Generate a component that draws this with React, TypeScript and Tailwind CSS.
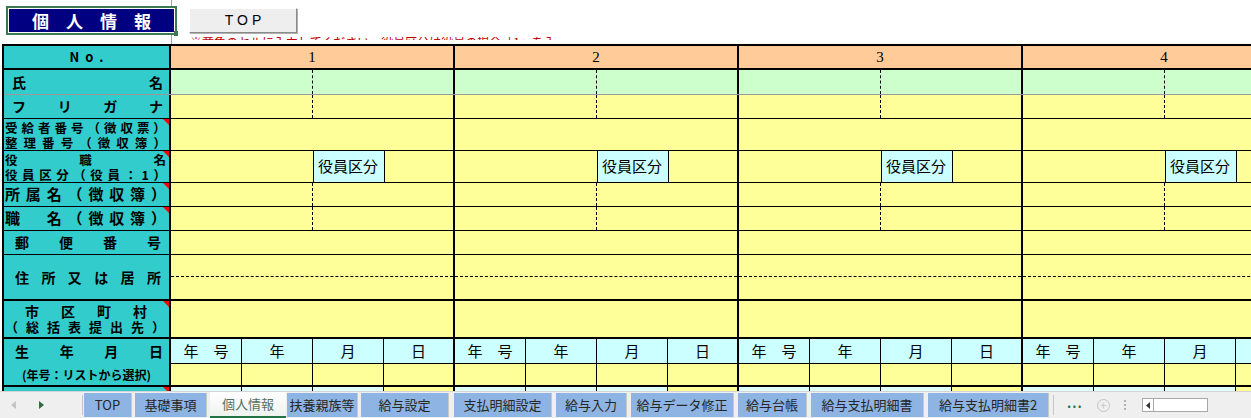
import React from 'react';

const JP = "font-['Noto_Sans_CJK_JP',sans-serif]";

function Dist({ text, className }: { text: string; className?: string }) {
  return (
    <div className={`flex justify-between ${className ?? ''}`}>
      {Array.from(text).map((c, i) => (
        <span key={i}>{c}</span>
      ))}
    </div>
  );
}

function Tri() {
  return <span className="absolute right-0 top-0 w-0 h-0 border-l-[6px] border-l-transparent border-t-[6px] border-t-[#ff0000]" />;
}

type Kind = 'head' | 'name' | 'kana' | 'plain' | 'yaku' | 'split' | 'addr' | 'birth' | 'tail';

function Group({ kind, n }: { kind: Kind; n: number }) {
  const base = 'w-[284px] shrink-0 h-full border-r-2 border-black';
  if (kind === 'head')
    return (
      <div className={`${base} bg-[#FFCC99] flex items-center justify-center font-['Liberation_Serif',serif] text-[15px] text-black`}>
        {n}
      </div>
    );
  if (kind === 'name' || kind === 'kana' || kind === 'split') {
    const bg = kind === 'name' ? 'bg-[#CCFFCC]' : 'bg-[#FFFF99]';
    return (
      <div className={`${base} ${bg} flex`}>
        <div className="w-[142px] h-full border-r border-dashed border-black" />
        <div className="flex-1" />
      </div>
    );
  }
  if (kind === 'plain') return <div className={`${base} bg-[#FFFF99]`} />;
  if (kind === 'yaku')
    return (
      <div className={`${base} bg-[#FFFF99] flex`}>
        <div className="w-[142px] h-full" />
        <div className={`w-[72px] h-full bg-[#CCFFFF] border-l border-r border-black flex items-center pl-[4px] text-[15px] ${JP} text-black`}>
          役員区分
        </div>
        <div className="flex-1" />
      </div>
    );
  if (kind === 'addr')
    return (
      <div className={`${base} bg-[#FFFF99] flex flex-col`}>
        <div className="h-[22px] border-b border-dashed border-black" />
        <div className="flex-1" />
      </div>
    );
  if (kind === 'birth') {
    const heads = ['年　号', '年', '月', '日'];
    return (
      <div className={`${base} flex flex-col`}>
        <div className="h-[25px] flex border-b border-black bg-[#CCFFFF]">
          {heads.map((h, i) => (
            <div
              key={i}
              className={`${i < 3 ? 'w-[71px] border-r border-black' : 'flex-1'} h-full flex items-center justify-center text-[15px] ${JP} text-black`}
            >
              {h}
            </div>
          ))}
        </div>
        <div className="flex-1 flex bg-[#FFFF99]">
          {heads.map((_, i) => (
            <div key={i} className={`${i < 3 ? 'w-[71px] border-r border-black' : 'flex-1'} h-full`} />
          ))}
        </div>
      </div>
    );
  }
  return (
    <div className={`${base} flex`}>
      <div className="w-[71px] border-r border-black bg-[#DFFFFF]" />
      <div className="w-[71px] border-r border-black bg-[#DFFFFF]" />
      <div className="w-[71px] border-r border-black bg-[#DFFFFF]" />
      <div className="flex-1 bg-[#FFFF99]" />
    </div>
  );
}

type Row = { h: string; b: string; kind: Kind; tri?: boolean; label: React.ReactNode };

const rows: Row[] = [
  {
    h: 'h-[24px]',
    b: 'border-b-2 border-black',
    kind: 'head',
    label: <div className="text-center text-[13px] font-bold tracking-[6px] pl-[6px]">No.</div>,
  },
  {
    h: 'h-[25px]',
    b: 'border-b border-[#9a9a9a]',
    kind: 'name',
    label: <Dist text="氏名" className="pl-[8px] pr-[6px] text-[14px] font-bold" />,
  },
  {
    h: 'h-[24px]',
    b: 'border-b border-black',
    kind: 'kana',
    label: <Dist text="フリガナ" className="pl-[8px] pr-[6px] text-[14px] font-bold" />,
  },
  {
    h: 'h-[32px]',
    b: 'border-b border-black',
    kind: 'plain',
    tri: true,
    label: (
      <div className="text-[12.5px] font-bold leading-[15px] pl-[1px] pr-[3px]">
        <Dist text="受給者番号（徴収票）" />
        <Dist text="整理番号（徴収簿）" />
      </div>
    ),
  },
  {
    h: 'h-[32px]',
    b: 'border-b border-black',
    kind: 'yaku',
    tri: true,
    label: (
      <div className="text-[12.5px] font-bold leading-[15px] pl-[1px] pr-[3px]">
        <Dist text="役職名" />
        <Dist text="役員区分（役員：1）" />
      </div>
    ),
  },
  {
    h: 'h-[24px]',
    b: 'border-b border-black',
    kind: 'split',
    tri: true,
    label: <Dist text="所属名（徴収簿）" className="pl-[1px] pr-[3px] text-[15px] font-bold" />,
  },
  {
    h: 'h-[24px]',
    b: 'border-b border-black',
    kind: 'split',
    tri: true,
    label: <Dist text="職　名（徴収簿）" className="pl-[1px] pr-[3px] text-[15px] font-bold" />,
  },
  {
    h: 'h-[24px]',
    b: 'border-b border-black',
    kind: 'plain',
    label: <Dist text="郵便番号" className="pl-[11px] pr-[8px] text-[14px] font-bold" />,
  },
  {
    h: 'h-[46px]',
    b: 'border-b-2 border-black',
    kind: 'addr',
    label: <Dist text="住所又は居所" className="pl-[11px] pr-[8px] text-[14px] font-bold" />,
  },
  {
    h: 'h-[38px]',
    b: 'border-b-2 border-black',
    kind: 'plain',
    tri: true,
    label: (
      <div className="font-bold leading-[16px]">
        <Dist text="市区町村" className="pl-[21px] pr-[22px] text-[14px]" />
        <Dist text="（総括表提出先）" className="pl-[1px] pr-[4px] text-[13px]" />
      </div>
    ),
  },
  {
    h: 'h-[48px]',
    b: 'border-b-2 border-black',
    kind: 'birth',
    label: (
      <div className="font-bold h-full flex flex-col">
        <Dist text="生年月日" className="h-[25px] items-center pl-[11px] pr-[6px] text-[14px]" />
        <div className="flex-1 flex items-center justify-center text-[12px]">(年号：リストから選択)</div>
      </div>
    ),
  },
  { h: 'h-[30px]', b: '', kind: 'tail', tri: true, label: null },
];

const tabs: { t: string; w: string; ml: string }[] = [
  { t: 'TOP', w: 'w-[48px]', ml: 'ml-[1px]' },
  { t: '基礎事項', w: 'w-[72px]', ml: 'ml-[3px]' },
  { t: '個人情報', w: 'w-[76px]', ml: 'ml-[3px]' },
  { t: '扶養親族等', w: 'w-[71px]', ml: 'ml-[1px]' },
  { t: '給与設定', w: 'w-[88px]', ml: 'ml-[3px]' },
  { t: '支払明細設定', w: 'w-[98px]', ml: 'ml-[5px]' },
  { t: '給与入力', w: 'w-[71px]', ml: 'ml-[4px]' },
  { t: '給与データ修正', w: 'w-[103px]', ml: 'ml-[4px]' },
  { t: '給与台帳', w: 'w-[69px]', ml: 'ml-[4px]' },
  { t: '給与支払明細書', w: 'w-[113px]', ml: 'ml-[4px]' },
  { t: '給与支払明細書2', w: 'w-[121px]', ml: 'ml-[4px]' },
];

export default function App() {
  return (
    <div className={`w-[1251px] h-[418px] overflow-hidden bg-white flex flex-col ${JP} text-black`}>
      {/* 上部ボタン */}
      <div className="h-[44px] shrink-0 relative">
        <div className="absolute left-[171px] top-0 w-px h-[44px] bg-[#a0a0a0]" />
        <div className="flex pt-[6px] pl-[6px]">
          <div className="relative w-[171px] h-[29px] border-2 border-[#3B7A50] bg-white p-px">
            <div className="h-full bg-[#000080] flex items-center justify-center text-white text-[17px] font-bold tracking-[17px] pl-[17px]">
              個人情報
            </div>
            <span className="absolute -right-[3px] -bottom-[3px] w-[4px] h-[5px] bg-[#3B7A50]" />
          </div>
          <div className="ml-[12px] mt-[2px] w-[108px] h-[25px] bg-[#EEEEEE] border border-t-[#ffffff] border-l-[#ffffff] border-r-[#8a8a8a] border-b-[#8a8a8a] shadow-[1px_1px_0_#b0b0b0] flex items-center justify-center text-[14px] tracking-[4px] pl-[4px] font-['Liberation_Sans',sans-serif]">
            TOP
          </div>
        </div>
        <div className="ml-[190px] mt-[2px] w-[366px] h-[3px] overflow-hidden">
          <div className="text-[12px] leading-[12px] text-[#C00000] whitespace-nowrap -mt-px">
            ※黄色のセルに入力してください。役員区分は役員の場合「1」を入力します。
          </div>
        </div>
      </div>

      {/* 表 */}
      <div className="flex-1 min-h-0 overflow-hidden">
        <div className="ml-[2px] w-max border-l-2 border-t-2 border-black">
          {rows.map((r, i) => (
            <div key={i} className={`flex ${r.h} ${r.b}`}>
              <div className="relative w-[167px] shrink-0 h-full bg-[#33CCCC] border-r-2 border-black flex flex-col justify-center">
                {r.label}
                {r.tri && <Tri />}
              </div>
              {[1, 2, 3, 4].map((n) => (
                <Group key={n} kind={r.kind} n={n} />
              ))}
            </div>
          ))}
        </div>
      </div>

      {/* シートタブ */}
      <div className="h-[27px] shrink-0 bg-[#EFEFEF] border-t border-[#d4d4d4] flex items-center text-[13px] text-[#262626]">
        <div className="w-[82px] h-full flex items-center">
          <svg width="5" height="8" viewBox="0 0 5 8" className="ml-[11px]">
            <path d="M5 0 L0 4 L5 8 Z" fill="#c4c4c4" />
          </svg>
          <svg width="5" height="8" viewBox="0 0 5 8" className="ml-[23px]">
            <path d="M0 0 L5 4 L0 8 Z" fill="#2f6b3f" />
          </svg>
        </div>
        <div className="w-px h-[20px] bg-[#c6c6c6]" />
        <div className="flex h-full items-end">
          {tabs.map((tb, i) => {
            const active = tb.t === '個人情報';
            return (
              <div key={i} className={`flex h-full items-end ${tb.ml}`}>
                <div
                  className={`${tb.w} flex items-center justify-center whitespace-nowrap ${
                    active
                      ? 'h-[26px] bg-gradient-to-b from-[#ffffff] to-[#eef3ef] border-b-2 border-[#217346] text-[#55735e]'
                      : 'h-[24px] mb-[1px] bg-[#8EB4E3] border-r border-[#c8c8c8]'
                  }`}
                >
                  {tb.t}
                </div>
              </div>
            );
          })}
        </div>
        <div className="ml-[4px] w-px h-[20px] bg-[#c6c6c6]" />
        <div className="ml-[13px] text-[#217346] font-bold text-[13px] tracking-[1px] -mt-[4px]">...</div>
        <div className="ml-[14px] w-[13px] h-[13px] rounded-full border border-[#c4c4c4] flex items-center justify-center text-[#c4c4c4] text-[11px] leading-none">
          +
        </div>
        <div className="ml-[14px] flex flex-col gap-[2px]">
          <span className="w-[2px] h-[2px] bg-[#b0b0b0]" />
          <span className="w-[2px] h-[2px] bg-[#b0b0b0]" />
          <span className="w-[2px] h-[2px] bg-[#b0b0b0]" />
        </div>
        <div className="ml-[16px] w-[66px] h-[14px] bg-white border border-[#a8a8a8] flex items-center">
          <svg width="4" height="7" viewBox="0 0 4 7" className="ml-[3px]">
            <path d="M4 0 L0 3.5 L4 7 Z" fill="#333" />
          </svg>
          <div className="ml-[3px] w-px h-full bg-[#a8a8a8]" />
        </div>
      </div>
    </div>
  );
}
